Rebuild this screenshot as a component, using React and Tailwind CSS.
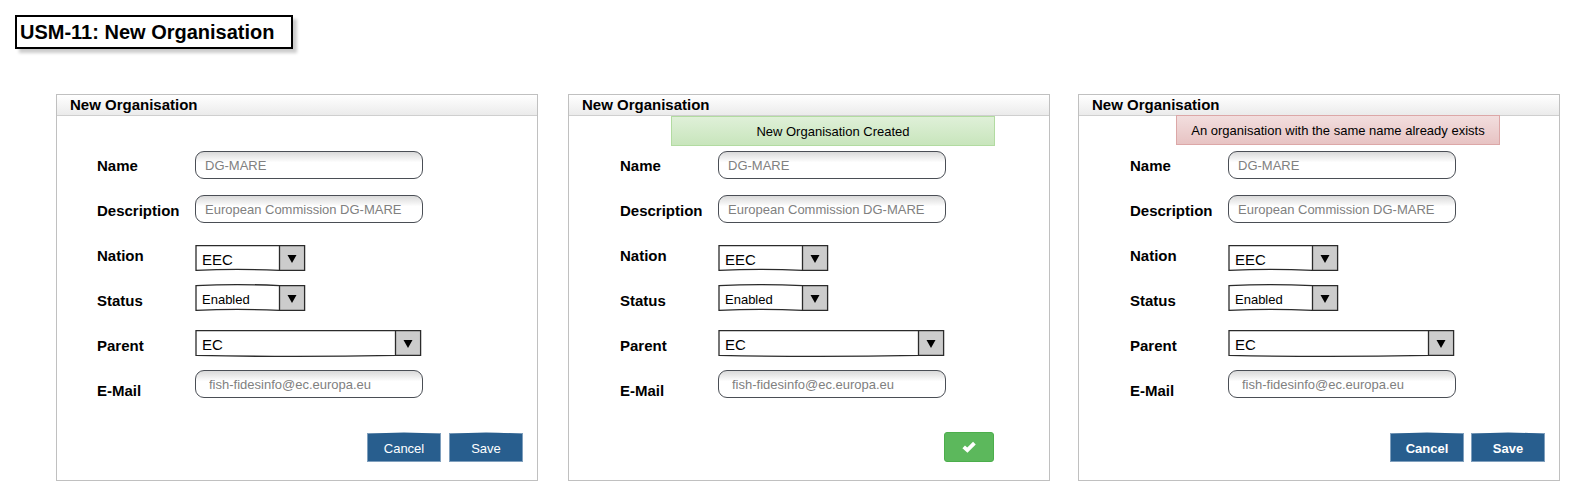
import { useId } from "react";

function SketchSelect({ id, value, size, frame, wide }) {
  const w = wide ? 226 : 110;
  const mid = (w - 26) / 2;
  const top = frame.top;
  const bottom = frame.bottom;
  return (
    <div className={`relative h-[26px] ${wide ? "w-[226px]" : "w-[110px]"}`}>
      <svg
        aria-hidden="true"
        viewBox={`0 0 ${w} 26`}
        className="absolute inset-0 h-full w-full overflow-visible"
        fill="none"
      >
        <rect x={w - 25.5} y="0.6" width="25" height="25" fill="#cccccc" />
        <path
          d={`M1 0.6 Q${mid} ${0.6 + top * 2} ${w - 25.5} 0.6 H${w - 0.4} V25.4 H${w - 25.5} Q${mid} ${25.4 + bottom * 2} 1 25.4 Z M${w - 25.5} 0.6 V25.4`}
          stroke="#2b2b2b"
          strokeWidth="1.3"
        />
        <path d={`M${w - 17.5} 10 h9 l-4.5 8 z`} fill="#000000" />
      </svg>
      <select
        id={id}
        defaultValue={value}
        className={`relative block h-full w-full appearance-none bg-transparent pt-1 pl-[7px] leading-[22px] text-black outline-none ${size}`}
      >
        <option>{value}</option>
      </select>
    </div>
  );
}

function TextField({ id, value, type = "text", inset = "pl-[9px]" }) {
  return (
    <input
      id={id}
      type={type}
      defaultValue={value}
      className={`block h-7 w-[228px] rounded-[9px] border border-[#4a4e55] bg-linear-to-b from-[#d9d9d9] via-white via-40% to-white pr-2 text-[13px] text-[#808080] outline-none ${inset}`}
    />
  );
}

function ActionButton({ children, bold }) {
  return (
    <button
      type="button"
      className={`relative h-[29px] w-[74px] border border-[#7f9fbd] bg-[#285e8e] pt-0.5 text-[13px] text-white ${bold ? "font-bold" : ""}`}
    >
      <svg
        aria-hidden="true"
        viewBox="0 0 72 2"
        className="absolute -top-0.5 left-0 h-0.5 w-full"
      >
        <path d="M0 2 Q36 -1 72 2 Z" fill="#285e8e" />
      </svg>
      <span className="relative">{children}</span>
    </button>
  );
}

function Panel({ formIndent, alert, actions, className = "" }) {
  const id = useId();
  const labels = ["Name", "Description", "Nation", "Status", "Parent", "E-Mail"];
  return (
    <section
      className={`min-w-[440px] flex-1 border border-[#c0c0c0] bg-white ${className}`}
    >
      <h2 className="h-[21px] border-b border-[#cfcfcf] bg-linear-to-b from-white to-[#ebebeb] pl-[13px] text-[15px] leading-[19px] font-bold">
        {"New Organisation"}
      </h2>
      <div className="flex h-[35px] items-start">{alert}</div>
      <form className={`flex ${formIndent}`} onSubmit={(e) => e.preventDefault()}>
        <div className="flex w-[98px] shrink-0 flex-col gap-[25px] pt-[5px] text-[15px] leading-5 font-bold">
          {labels.map((label) => (
            <label key={label} htmlFor={`${id}-${label}`}>
              {label}
            </label>
          ))}
        </div>
        <div className="flex flex-col">
          <TextField id={`${id}-Name`} value="DG-MARE" />
          <div className="mt-4">
            <TextField id={`${id}-Description`} value="European Commission DG-MARE" />
          </div>
          <div className="mt-[22px]">
            <SketchSelect id={`${id}-Nation`} value="EEC" size="text-[15px]" frame={{ top: 0, bottom: -1 }} />
          </div>
          <div className="mt-3.5">
            <SketchSelect id={`${id}-Status`} value="Enabled" size="text-[13px]" frame={{ top: -1, bottom: -1 }} />
          </div>
          <div className="mt-[19px]">
            <SketchSelect id={`${id}-Parent`} value="EC" size="text-[15px]" frame={{ top: 0, bottom: 1 }} wide />
          </div>
          <div className="mt-3.5">
            <TextField id={`${id}-E-Mail`} type="email" value="fish-fidesinfo@ec.europa.eu" inset="pl-[13px]" />
          </div>
        </div>
      </form>
      <div className="flex h-[79px] justify-end pt-[31px]">{actions}</div>
    </section>
  );
}

function Alert({ children, className }) {
  return (
    <p
      role="status"
      className={`h-[30px] w-[324px] border bg-linear-to-b text-center text-[13px] leading-[29px] ${className}`}
    >
      {children}
    </p>
  );
}

export default function App() {
  return (
    <main className="min-h-screen bg-white pb-3 font-['Liberation_Sans',Arial,sans-serif] text-black">
      <header className="flex pt-[15px] pl-[15px]">
        <h1 className="border-2 border-black bg-white pr-4 pl-[3px] text-[20px] leading-[30px] font-bold shadow-[4px_4px_3px_rgba(0,0,0,0.2)]">
          {"USM-11: New Organisation"}
        </h1>
      </header>
      <div className="mt-[45px] flex flex-wrap gap-7 pr-3.5 pl-14">
        <Panel
          formIndent="ml-10"
          actions={
            <div className="mr-3.5 flex gap-2 pt-px">
              <ActionButton>Cancel</ActionButton>
              <ActionButton>Save</ActionButton>
            </div>
          }
        />
        <Panel
          className="ml-0.5"
          formIndent="ml-[51px]"
          alert={
            <Alert className="ml-[102px] border-[#b2dba1] from-[#dff0d8] to-[#c8e5bc]">
              New Organisation Created
            </Alert>
          }
          actions={
            <button
              type="button"
              aria-label="Done"
              className="mr-[55px] flex h-[30px] w-[50px] items-center justify-center rounded-[3px] border border-[#4cae4c] bg-[#5cb85c]"
            >
              <svg aria-hidden="true" viewBox="0 0 14 12" className="h-3 w-3.5">
                <path d="M1.7 5.8 L5.4 9.2 L12.4 2.2" fill="none" stroke="#ffffff" strokeWidth="3.8" />
              </svg>
            </button>
          }
        />
        <Panel
          formIndent="ml-[51px]"
          alert={
            <Alert className="-mt-px ml-[97px] border-[#dca7a7] from-[#f2dede] to-[#e7c3c3]">
              An organisation with the same name already exists
            </Alert>
          }
          actions={
            <div className="mr-3.5 flex gap-[7px] pt-px">
              <ActionButton bold>Cancel</ActionButton>
              <ActionButton bold>Save</ActionButton>
            </div>
          }
        />
      </div>
    </main>
  );
}
